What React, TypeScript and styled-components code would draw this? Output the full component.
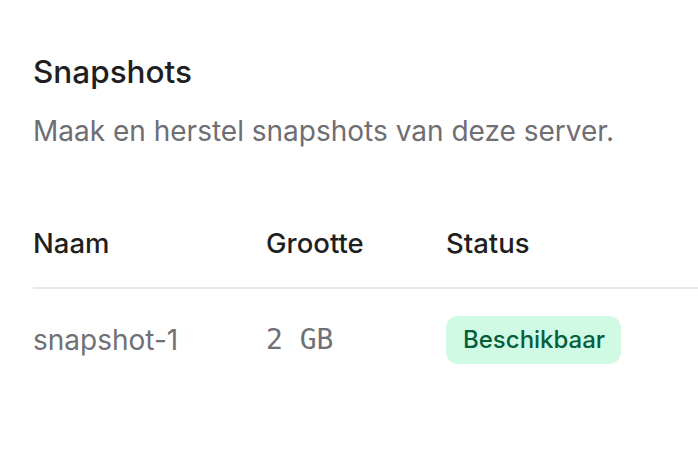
import React from "react";
import styled, { createGlobalStyle } from "styled-components";

const GlobalStyle = createGlobalStyle`
  html, body {
    margin: 0;
    padding: 0;
    background: #ffffff;
    font-family: Inter, "Noto Sans", sans-serif;
    -webkit-font-smoothing: antialiased;
  }
`;

interface Snapshot {
  name: string;
  size: string;
  status: string;
}

const snapshots: Snapshot[] = [
  { name: "snapshot-1", size: "2 GB", status: "Beschikbaar" },
];

const App: React.FC = () => {
  return (
    <>
      <GlobalStyle />
      <Section>
        <Title>Snapshots</Title>
        <Lead>Maak en herstel snapshots van deze server.</Lead>
        <Table>
          <thead>
            <tr>
              <HeadCell>Naam</HeadCell>
              <HeadCell>Grootte</HeadCell>
              <HeadCell>Status</HeadCell>
            </tr>
          </thead>
          <tbody>
            {snapshots.map((snap) => (
              <tr key={snap.name}>
                <Cell>{snap.name}</Cell>
                <Cell $mono>{snap.size}</Cell>
                <Cell>
                  <Badge>{snap.status}</Badge>
                </Cell>
              </tr>
            ))}
          </tbody>
        </Table>
      </Section>
    </>
  );
};

export default App;

const Section = styled.section`
  padding: 52px 0 0 33px;
  overflow: hidden;
`;

const Title = styled.h2`
  margin: 0;
  font-size: 31.5px;
  font-weight: 500;
  line-height: 40px;
  color: #1f1f22;
`;

const Lead = styled.p`
  margin: 21px 0 0;
  font-size: 28px;
  line-height: 36px;
  color: #6e6e73;
`;

const Table = styled.table`
  margin-top: 76px;
  width: 720px;
  border-collapse: collapse;
`;

const HeadCell = styled.th`
  text-align: left;
  font-size: 27.5px;
  line-height: 36px;
  font-weight: 500;
  color: #1f1f22;
  padding: 0 0 26px;
  border-bottom: 2px solid #e8e8ea;

  &:nth-child(1) {
    width: 233px;
  }
  &:nth-child(2) {
    width: 180px;
  }
`;

const Cell = styled.td<{ $mono?: boolean }>`
  padding: 27px 0;
  font-size: 28px;
  line-height: 36px;
  color: #707075;
  vertical-align: middle;
  font-family: ${(p) =>
    p.$mono ? `"DejaVu Sans Mono", "Liberation Mono", monospace` : "inherit"};
`;

const Badge = styled.span`
  display: inline-block;
  padding: 9px 16px 9px 17px;
  line-height: 30px;
  border-radius: 12px;
  background: #d1fae5;
  color: #065f3c;
  font-size: 24px;
  font-weight: 500;
`;
